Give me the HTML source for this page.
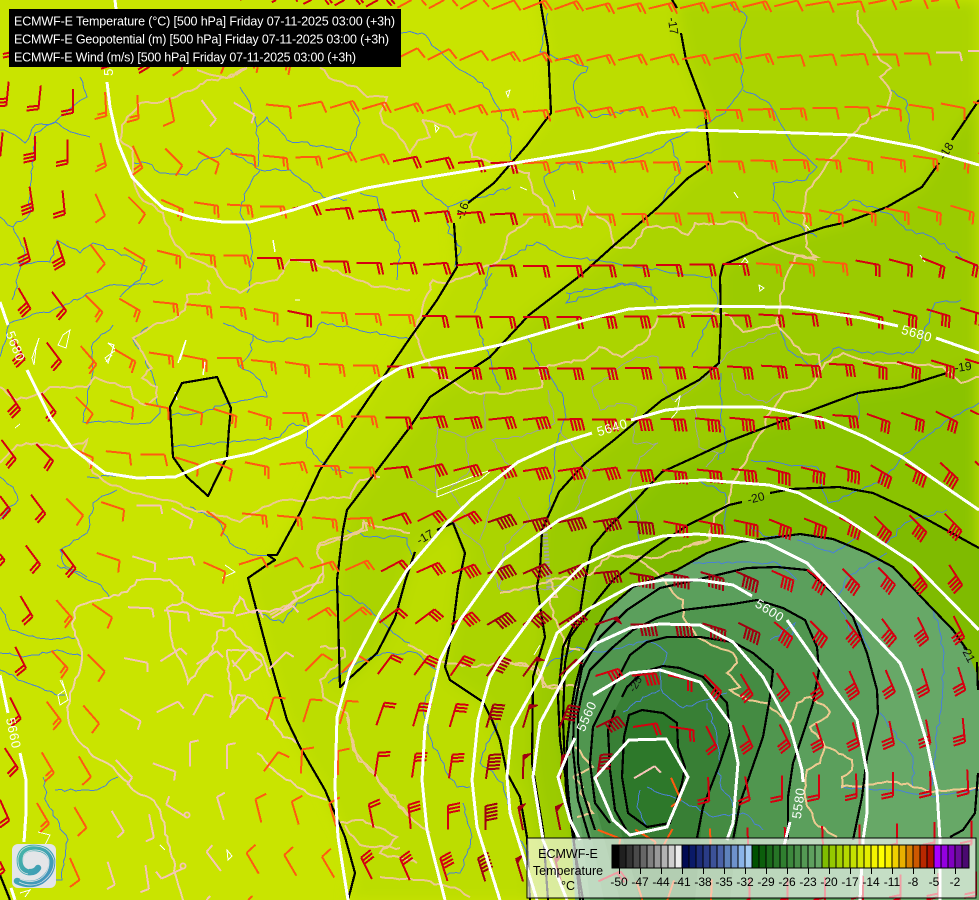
<!DOCTYPE html>
<html lang="en"><head><meta charset="utf-8"><title>ECMWF-E 500 hPa</title>
<style>
html,body{margin:0;padding:0;background:#c9e400;width:979px;height:900px;overflow:hidden}
svg{display:block;font-family:"Liberation Sans",sans-serif}
.wl{fill:#fff;font-size:13px;letter-spacing:.6px}
.bl{fill:#111;font-size:12px}
.k{fill:none;stroke:#000;stroke-width:2.2;stroke-linejoin:round;shape-rendering:crispEdges}
.w{fill:none;stroke:#fff;stroke-width:3;stroke-linejoin:round;stroke-linecap:butt;shape-rendering:crispEdges}
.r{fill:none;stroke:#4a82d4;stroke-width:1;shape-rendering:crispEdges}
.b{fill:none;stroke:#ecca90;stroke-width:2;shape-rendering:crispEdges}
.g{fill:none;stroke:#9ca39a;stroke-width:1;shape-rendering:crispEdges}
.c{fill:none;stroke:#fff;stroke-width:1;shape-rendering:crispEdges}
.t{fill:#fff;font-size:12.5px}
.l{fill:#000;font-size:12px;text-anchor:middle}
</style></head><body>
<svg id="m" xmlns="http://www.w3.org/2000/svg" width="979" height="900" viewBox="0 0 979 900">
<defs>
<filter id="bl" x="-5%" y="-5%" width="110%" height="110%"><feGaussianBlur stdDeviation="7"/></filter>
<linearGradient id="lg" x1="0" y1="0" x2="1" y2="1"><stop offset="0" stop-color="#45b7a6"/><stop offset=".6" stop-color="#3f9fb4"/><stop offset="1" stop-color="#4a8fc2"/></linearGradient>
</defs>
<rect width="979" height="900" fill="#c9e400"/>
<g filter="url(#bl)">
<polygon fill="#bcdd00" points="540,0 548,47 551,113 527,145 494,183 468,203 454,225 457,267 437,300 410,338 320,470 300,513 277,555 248,578 267,650 287,720 300,747 325,790 345,837 355,873 348,900 979,900 979,0"/>
<polygon fill="#abd400" points="677,0 681,33 686,60 705,110 710,163 688,178 655,210 612,247 581,275 529,315 490,357 430,397 410,427 347,510 343,530 337,580 340,687 377,653 395,618 405,582 415,552 453,523 465,553 458,587 453,627 445,667 450,680 483,702 500,740 507,773 520,797 527,837 530,900 979,900 979,0"/>
<polygon fill="#9bcb00" points="979,100 950,140 922,187 887,207 847,222 769,245 723,265 720,277 721,320 719,363 699,380 662,400 614,440 585,463 559,492 542,530 540,570 537,587 545,637 533,677 532,763 543,830 548,900 979,900"/>
<polygon fill="#8ac300" points="979,362 963,367 902,387 858,393 799,415 727,442 695,457 662,472 636,500 609,527 592,547 585,580 580,613 563,647 558,697 560,740 572,823 580,900 979,900"/>
</g>
<polygon fill="#7fbb00" points="979,548 910,510 873,493 839,487 791,489 756,498 729,505 688,525 651,550 613,580 597,600 570,637 565,663 563,720 566,790 575,850 580,900 979,900"/>
<polygon fill="#bedf00" points="182,383 217,377 231,408 229,428 227,457 208,496 187,477 173,457 170,407"/>
<polygon fill="#67a867" points="677,570 707,553 740,542 800,534 833,539 867,553 893,567 927,603 953,630 967,650 979,680 979,900 575,900 570,813 567,777 567,743 570,717 575,687 583,657 597,627 607,610 633,587"/>
<polygon fill="#5b9f5c" points="627,610 660,588 687,582 747,568 777,567 807,570 833,593 853,617 867,653 877,690 878,713 867,757 862,797 853,833 850,900 590,900 578,800 573,750 574,710 582,668 600,637"/>
<polygon fill="#50964f" points="683,610 733,604 757,600 783,608 805,620 817,647 819,670 813,703 802,737 793,763 788,797 788,900 604,900 583,793 578,763 578,713 582,693 590,670 613,647 633,630 657,618"/>
<polygon fill="#448b42" points="667,637 700,637 733,642 753,653 773,670 770,697 763,737 740,803 730,900 620,900 595,803 590,763 593,727 610,693 630,655 647,642"/>
<polygon fill="#387f35" points="663,666 680,668 703,677 727,703 730,733 720,763 703,807 695,900 640,900 615,810 610,770 608,730 615,710 627,687 643,672"/>
<polygon fill="#2d782a" points="642,710 663,713 677,723 678,747 685,767 682,783 670,823 647,827 628,813 622,777 624,737 629,715"/>

<!-- rivers -->
<g class="r" id="rv">
<path d="M0 265 15 263 50 262 57 240 80 253 93 243 117 252 147 267 140 280 120 297"/>
<path d="M80 77 87 97 77 103 57 120 35 133 33 167 30 193 30 213 13 227 25 253 12 300"/>
<path d="M0 217 13 227M0 130 15 135 25 143 35 125 55 122 75 133 90 137"/>
<path d="M133 163 147 163 160 173 187 175 203 160 217 157 227 148 243 158 260 170 290 170 307 183 323 197 347 200"/>
<path d="M260 170 247 190 240 213 250 233 253 267 247 293"/>
<path d="M240 87 250 103 257 127 258 167M257 127 267 117 287 140 327 147 350 153 360 123 353 107"/>
<path d="M360 193 377 197 387 227 400 247 397 280"/>
<path d="M0 357 10 323 37 313 53 310 83 297 110 285 153 285 163 280"/>
<path d="M113 325 93 343 92 377 83 422 150 423 160 413 153 377 140 350 133 340 148 327"/>
<path d="M223 323 253 335 267 342 310 337 322 322 410 340"/>
<path d="M253 335 250 353 240 367 260 380 267 397 230 403 197 413 172 415"/>
<path d="M172 447 200 445 253 440 280 437 293 423 307 427 307 447 317 457 333 470 353 473"/>
<path d="M87 477 173 477M190 507 217 520 230 543 253 555 270 555"/>
<path d="M117 490 93 503 87 533 60 550 63 563 87 577"/>
<path d="M0 477 13 487 18 500 0 520M57 565 97 583 110 598"/>
<path d="M0 607 10 630 37 638 77 638M0 670 33 685 60 695 65 695M0 653 23 657 57 650 83 657"/>
<path d="M55 790 97 790 118 777M43 777 47 803 68 840 62 880 47 883"/>
<path d="M257 613 283 623 297 603 337 590 367 607 393 633 410 643"/>
<path d="M328 683 350 667 383 653 417 653 437 670 423 707 430 737 445 770 457 787 470 787"/>
<path d="M463 803 472 837 460 873 447 875M347 530 370 537 407 538 412 555"/>
<path d="M497 723 480 763 503 783 513 827 530 860"/>
<path d="M729 3 747 17 740 40 743 87 725 113 695 130 670 140 651 153 614 163 566 163 544 177 555 207"/>
<path d="M743 90 769 103 791 143 817 167 806 180 773 183 773 200 788 220 817 237"/>
<path d="M891 90 906 100 910 140M825 220 854 200 887 213 906 230 932 237 976 267"/>
<path d="M548 13 540 52 588 67 574 82 577 103 592 117 636 110"/>
<path d="M400 33 422 33 452 63 489 90 511 137 511 160"/>
<path d="M670 140 681 170 670 187 659 207M511 187 485 197 465 200 448 207 426 190 422 180"/>
<path d="M485 290 489 267 537 242 566 257 596 260 636 267 710 277 718 300 718 303 706 327 692 357"/>
<path d="M448 207 448 233 461 247 455 267M566 293 636 283 658 300M570 293 566 303 622 283 651 287 655 303"/>
<path d="M474 313 492 273M479 330 492 367 500 390M527 337 540 367 562 393 566 417 555 450 555 477 548 510"/>
<path d="M721 373 721 420 727 443 718 460M780 327 788 350 814 367 839 347 862 353 913 353 921 340 935 303 961 300"/>
<path d="M858 393 858 420M979 403 947 420 902 457 880 483 828 503 817 467 751 460M947 510 905 523 885 545"/>
<path d="M699 480 725 493 725 533M636 510 640 543M751 527 769 537 800 534"/>
<path d="M887 553 847 577 838 600 852 640M797 540 833 553 860 535M693 563 777 563 797 580"/>
<path d="M933 607 943 647 943 687 930 793M880 713 913 757 913 787"/>
<path d="M790 643 795 623 770 640M640 790 637 807 647 827M647 787 673 797 713 817 743 813 763 830"/>
<path d="M660 673 663 693 683 708 707 700 727 693M660 690 643 697 623 712M707 703 717 737 720 783 733 807"/>
<path d="M543 667 577 647 603 652 647 640 667 653 660 673M840 787 897 790 933 797 979 790M850 610 870 650"/>
</g>
<!-- grey admin borders -->
<g class="g" id="gr">
<path d="M485 393 485 430 466 437 437 427 435 460 437 493M548 390 555 423 522 437 492 440 511 470 489 510 480 540"/>
<path d="M592 387 636 357 658 357 666 390 673 400 688 392 718 367 732 350 777 333"/>
<path d="M622 403 636 407 633 443 658 443 640 457 629 490 640 520M732 373 736 390 766 403 780 393"/>
<path d="M695 410 699 447 718 453 706 467M592 387 600 410 622 403M466 437 470 470 450 490 470 520"/>
<path d="M519 497 530 520 505 545 500 590M410 480 437 493M560 430 590 470 575 510"/>
<path d="M450 520 480 545 500 590 545 590 560 585 590 592"/>
</g>
<path d="M545 530 549 590" fill="none" stroke="#a3a69a" stroke-width="5" stroke-dasharray="2 1.5"/>
<!-- borders -->
<g class="b" id="bd">
<path d="M197 70 227 78 247 68M320 68 333 80 357 87 367 97 387 97 380 113 383 123 397 133 410 153 418 140"/>
<path d="M247 68 227 78 207 80 197 88 173 98 157 103 140 103 127 117 122 125 120 140 133 150 133 177 140 197 163 213 173 240 187 257 213 267 223 283 240 293 257 283 277 280 290 260 315 263 350 277 377 287 410 290"/>
<path d="M207 280 210 293 187 295 185 310 173 320 157 323 133 338 143 353 152 368 142 378 157 387 157 397 145 405 133 398 130 387 110 383 95 377 87 387 50 387 43 393 17 400 0 387"/>
<path d="M0 463 17 445 37 443 67 448 87 440 83 450 93 473 107 483 133 493 167 500 193 510 213 513 240 522 263 507 283 500 310 500 333 497 350 498 360 480 380 477"/>
<path d="M317 550 320 543 343 537 363 528 363 523 410 533M363 520 367 530 343 540 320 545 317 553 323 565 322 582 293 592 297 600 290 605 270 615"/>
<path d="M320 647 343 648 345 657 320 680 323 697 347 713 353 750 370 768 387 793 410 817 430 833"/>
<path d="M408 645 443 662 473 667 507 662 537 667 547 687 563 690"/>
<path d="M500 662 520 663 537 670 543 687 572 685 580 690M573 777 583 787 580 793 593 813 577 817M575 747 593 767 573 777"/>
<path d="M637 558 657 573 673 593 683 600 683 617 697 637 717 647 733 653 737 663 727 673 740 687 730 690 747 700 767 703 777 712 790 722 797 703 810 697 830 712 822 720 810 727 825 747 852 760 852 770 842 777 842 787 897 782 933 792 979 788"/>
<path d="M825 747 820 763 807 770 805 797 815 823 837 837"/>
<path d="M500 593 537 585 550 580 557 597 550 597 553 617 567 647 580 650M617 557 637 558M687 547 710 540 710 530"/>
<path d="M766 417 766 427 754 443 747 460 732 483 729 503 714 517 710 540 684 547 662 557 636 557 610 555 590 575 550 580"/>
<path d="M777 403 784 393 810 387 821 370 825 363 843 353 873 363 910 363 943 367 961 383 979 377M766 417 777 403"/>
<path d="M821 370 819 355 802 353 791 340 778 325 769 327 743 332 725 313 684 312 658 317 647 340 633 350 622 357 599 347 585 360 540 367 542 387 511 393 470 393 455 383 433 370 422 353 415 330 433 280 448 283 474 273 500 260 507 237 533 217"/>
<path d="M858 10 858 23 873 43 880 60 891 68 880 77 891 93 887 110 869 118 854 133 832 157 806 193 803 213 806 233 806 247 817 257 795 257 784 283 780 300 777 325"/>
<path d="M422 120 430 137 418 140M422 120 448 127 455 137 476 133 470 147 472 157 494 163 529 173 533 193 548 207 555 227 581 227 588 207 610 227 614 247 631 248 647 227 673 227 688 235 695 223 740 223 762 240 788 253 817 260"/>
<path stroke="#f0d0aa" d="M100 600 77 607 72 623 78 640 82 653 80 670 70 693 68 713 73 733 90 753 113 767 133 790 150 798 160 810 170 847 177 880 183 900"/>
<path stroke="#f0d0aa" d="M100 600 127 592 137 580 170 580 183 593 183 602 167 608 170 630 173 647 182 663 188 683 200 667 213 650 217 632 230 628 240 640 263 657 270 677"/>
<path stroke="#f2c8b8" d="M183 602 200 610 217 613 233 613 240 597 250 612 283 610 307 593 323 573"/>
<path stroke="#f0d0aa" d="M227 650 230 693 233 713 247 697 267 713 283 737 300 743M257 753 277 773 307 793 327 800M232 660 245 680 262 665 250 650 227 650"/>
<path d="M347 717 357 757 377 777 410 817M337 823 363 820 397 837 380 853 417 863M380 877 420 880 460 890 470 897M345 825 360 845 400 848"/>
</g>
<g class="c">
<path d="M437 497 480 480 492 470 482 473 437 490Z"/><path d="M63 335 70 330 66 348 58 345Z"/><path d="M36 348 39 338 32 358 34 365Z"/>
<path d="M108 343 116 350 105 358 108 363 114 345Z"/><path d="M106 362 112 355M15 428 20 424"/>
<path d="M506 92 510 90 508 97Z"/><path d="M435 125 439 128 436 132Z"/><path d="M759 285 764 288 760 291Z"/>
<path d="M60 680 65 690 58 695 60 705 68 700 62 680M38 832 50 835 45 845"/>
<path d="M20 893 30 890 25 897M227 850 232 856 228 860Z"/><path d="M225 565 235 572 222 578 M160 845 165 850"/>
<path stroke-width="1.5" d="M273 240 275 252 M175 392 177 400M180 360 186 340 178 363M205 362 203 375"/>
<path d="M300 300 295 300M534 655 540 645 M520 187 527 190M573 190 575 200M734 192 738 198"/>
<path d="M740 265 745 258 748 262Z"/><path d="M806 225 810 230M920 255 925 262"/>
<path d="M675 402 680 396 677 412 670 420"/>
</g>

<!-- black contours -->
<g class="k">
<path d="M540 0 548 47 551 113 527 145 494 183 468 203"/><path d="M454 223 457 267 437 300 410 338 320 470 300 513 277 555 268 555 275 560 267 565 248 578 267 650 287 720 300 747 325 790 345 837 355 873 348 900"/>
<path d="M182 383 217 377 231 408 229 428 227 457 208 496 187 477 173 457 170 407Z"/>
<path d="M0 875 10 900"/>
<path d="M672 0 677 8"/><path d="M681 33 686 60 705 110 710 163 688 178 655 210 612 247 581 275 529 315 490 357 430 397 410 427 347 510 343 530 337 580 340 687 377 653 395 618 405 582 415 552"/><path d="M437 530 453 523 465 553 458 587 453 627 445 667 450 680 483 702 492 720 500 740 507 773 520 797 527 837 530 900"/>
<path d="M979 100 952 140"/><path d="M939 163 922 187 887 207 847 222 825 227 769 245 723 265 720 277 721 320 719 363 699 380 662 400 614 440 585 463 559 492 542 530 540 570 537 587 545 637 533 677 532 763 543 830 548 900"/>
<path d="M947 373 902 387 858 393 799 415 777 423 727 442 695 457 662 472 636 500 609 527 592 547 585 580 580 613 563 647 558 697 560 740 572 823 580 900"/>
<path d="M979 548 910 510 873 493 839 487 791 489 770 493"/><path d="M742 502 729 505 688 525 651 550 613 580 597 600 570 637 565 663 563 720 566 790 575 850 583 900"/>
<path d="M967 650 953 630 927 603 893 567 867 553 833 539 800 534 740 542 707 553 677 570 633 587 607 610 597 627 583 657 575 687 570 717 567 743 567 777 570 813 575 840"/>
<path d="M977 662 978 690M978 773 975 813 963 830 950 837"/>
<path d="M627 610 660 588 687 582 747 568 777 567 807 570 833 593 853 617 867 653 877 690 878 713 867 757 862 797 853 840"/><path d="M627 610 600 637 582 668 574 710 573 750 578 800 590 840"/>
<path d="M683 610 733 604 757 600 783 608 805 620 817 647 819 670 813 703 802 737 793 763 788 797 788 840"/><path d="M683 610 657 618 633 630 613 647 590 670 582 693 578 713 578 763 583 793 595 830"/>
<path d="M667 637 700 637 733 642 753 653 773 670 770 697 763 737 740 803 733 840"/><path d="M667 637 647 642 630 655 617 680 610 693 593 727 590 763 595 803 610 823"/>
<path d="M663 666 680 668 703 677 727 703 730 733 720 763 703 807 697 838"/><path d="M663 666 643 672 627 687 622 697"/><path d="M615 710 608 730 610 770 615 810 628 833"/>
<path d="M642 710 663 713 677 723 678 747 685 767 682 783 670 823 647 827 628 813 622 777 624 737 629 715Z"/>
</g>
<g class="bl">
<text transform="translate(673,26) rotate(82)" text-anchor="middle" x="0" y="4">-17</text>
<text transform="translate(462,211) rotate(-68)" text-anchor="middle" y="4">-16</text>
<text transform="translate(946,151) rotate(-58)" text-anchor="middle" y="4">-18</text>
<text transform="translate(963,367) rotate(-8)" text-anchor="middle" y="4">-19</text>
<text transform="translate(756,498) rotate(-14)" text-anchor="middle" y="4">-20</text>
<text transform="translate(968,654) rotate(62)" text-anchor="middle" y="4">-21</text>
<text transform="translate(425,537) rotate(-30)" text-anchor="middle" y="4">-17</text>
<text transform="translate(635,684) rotate(-60)" text-anchor="middle" y="4" font-size="11">-25</text>
</g>

<g id="barbs" stroke-linecap="butt" shape-rendering="crispEdges" fill="none"></g>
<circle cx="187" cy="815" r="2.6" fill="none" stroke="#f5c4b8" stroke-width="1.8"/>
<circle cx="183" cy="866" r="2.6" fill="none" stroke="#f5c4b8" stroke-width="1.8"/>

<!-- white contours -->
<g class="w">
<path d="M115 0 116 9"/><path d="M107 82 110 107 118 143 132 177 147 193 163 208 193 218 223 222 250 222 293 210 333 197 367 188 400 182 485 168 592 150 658 133 688 130 769 132 854 135 917 147 979 165"/>
<path d="M0 302 8 325"/><path d="M27 370 50 417 72 448 105 473 137 478 175 477 210 462 253 453 300 433 340 408 383 378 400 368 437 358 500 345 585 320 629 309 695 306 788 307 862 318 898 326"/><path d="M936 338 979 353"/>
<path d="M0 675 8 713"/><path d="M20 753 26 780 26 813 24 842"/><path d="M11 888 15 900"/>
<path d="M348 900 338 837 335 787 337 717 350 670 380 613 407 570 447 523 474 497 518 462 555 445 592 433"/><path d="M631 420 666 410 699 407 762 407 825 420 865 437 902 457 954 493 979 510"/>
<path d="M445 900 427 830 422 780 425 727 440 660 460 620 503 560 559 520 629 490 666 482 703 480 769 485 799 493 843 517 913 563 927 577 979 630"/>
<path d="M500 900 477 827 472 780 478 720 490 677 500 660 537 610 583 565 623 547 663 536 697 534 733 537 767 543 807 563 850 610 900 663 910 687 927 743 937 790 940 840 940 900"/>
<path d="M537 900 510 813 507 777 512 727 540 677 557 633 587 610 633 585 663 580 700 580 733 585 752 596"/><path d="M787 620 813 657 833 687 857 720 867 773 867 813 863 840 860 900"/>
<path d="M567 900 543 840 533 777 540 723 567 673 597 643 630 628 660 624 700 625 733 642 763 677 790 727 802 770 803 782"/><path d="M790 822 783 850"/>
<path d="M580 840 570 820 558 777 568 753 575 738"/><path d="M593 695 630 673 660 670 700 682 730 723 738 763 733 823 727 840"/>
<path d="M595 778 629 740 666 739 688 777 667 827 630 835 613 820Z"/>
</g>
<g class="wl" text-anchor="middle">
<text transform="translate(108,72) rotate(-90)" y="5" font-size="13">5</text>
<text transform="translate(16,346) rotate(68)" y="5">5680</text>
<text transform="translate(917,333) rotate(16)" y="5">5680</text>
<text transform="translate(14,733) rotate(78)" y="5">5660</text>
<text transform="translate(612,427) rotate(-17)" y="5">5640</text>
<text transform="translate(770,610) rotate(32)" y="5">5600</text>
<text transform="translate(798,803) rotate(-82)" y="5">5580</text>
<text transform="translate(586,716) rotate(-66)" y="5">5560</text>
</g>

<!-- title -->
<rect x="9" y="9" width="392" height="58" fill="#000"/>
<text class="t" x="14" y="25.5" textLength="381" lengthAdjust="spacing">ECMWF-E Temperature (°C) [500 hPa] Friday 07-11-2025 03:00 (+3h)</text>
<text class="t" x="14" y="43.5" textLength="375" lengthAdjust="spacing">ECMWF-E Geopotential (m) [500 hPa] Friday 07-11-2025 03:00 (+3h)</text>
<text class="t" x="14" y="61.5" textLength="342" lengthAdjust="spacing">ECMWF-E Wind (m/s) [500 hPa] Friday 07-11-2025 03:00 (+3h)</text>

<!-- logo -->
<rect x="12" y="844" width="44" height="44" rx="6" fill="#e3e5e8"/>
<path d="M17 881 Q30 887 41 881 Q53 873 52 860 Q49 849 36 848 Q22 847 20 858 Q19 870 28 872 Q35 873 38 868" fill="none" stroke="url(#lg)" stroke-width="6.5" stroke-linecap="round"/>
<path d="M19 882 Q31 888 42 882 Q55 873 54 860 Q50 847 36 846 Q21 845 18 858 Q17 872 28 874" fill="none" stroke="#e3e5e8" stroke-width=".7"/>
<path d="M20 879 Q30 884 40 879 Q50 872 49 860 Q47 851 36 850 Q24 850 23 858 Q22 867 29 869" fill="none" stroke="#e3e5e8" stroke-width=".7"/>

<!-- legend -->
<rect x="527" y="838" width="449" height="60" fill="#fff" fill-opacity=".62" stroke="#000" stroke-width="1"/>
<g id="lgd" shape-rendering="crispEdges"></g>
<g font-size="12.5" fill="#000" text-anchor="middle">
<text x="568" y="858">ECMWF-E</text>
<text x="568" y="875">Temperature</text>
<text x="568" y="890">°C</text>
</g>
<g class="l">
<text x="619" y="886">-50</text><text x="640" y="886">-47</text><text x="661" y="886">-44</text><text x="682" y="886">-41</text><text x="703" y="886">-38</text><text x="724" y="886">-35</text><text x="745" y="886">-32</text><text x="766" y="886">-29</text><text x="787" y="886">-26</text><text x="808" y="886">-23</text><text x="829" y="886">-20</text><text x="850" y="886">-17</text><text x="871" y="886">-14</text><text x="892" y="886">-11</text><text x="913" y="886">-8</text><text x="934" y="886">-5</text><text x="955" y="886">-2</text>
</g>
</svg>
<script>
(function(){
var P=[
[10,-10,.6,-.6,4],[120,0,.7,-.5,4],[250,10,.9,-.5,4],[350,5,.9,-.5,3.5],[433,10,1,-.55,1.5],[500,10,1,-.4,2],[750,10,1,-.25,2],[900,10,1,-.2,2],[970,8,1,-.1,1],
[10,30,0,1,4],[100,40,.1,1,4],[250,50,.9,.4,2],[350,58,1,-.3,1.5],[400,60,1,-.5,1.5],[600,63,1,-.25,2.5],[800,62,1,-.1,2],[900,58,1,0,1.5],[945,55,1,0,.8],
[10,80,-.1,1,4],[42,83,-.1,1,4],[74,87,0,1,3.5],[107,92,.05,1,2.5],[138,93,.05,1,2],[172,97,.2,1,1.5],[203,99,.6,.8,.7],[235,102,.85,.5,.7],[268,104,1,.1,1.5],[300,107,1,-.2,1.5],[332,108,1,-.3,2.5],[432,110,1,-.3,2.5],[600,110,1,-.2,2.5],[800,110,1,0,2],[900,105,1,.15,1.5],[965,100,1,.2,1],
[9,133,-.1,1,4.5],[36,135,0,1,4],[70,140,0,1,3.5],[100,142,.25,1,2.5],[135,145,.4,.9,2],[167,148,.7,.7,1.5],[200,150,.9,.5,2],[230,155,1,.1,2],[265,155,1,.1,2],[330,155,1,-.3,2.5],[400,160,1,-.2,3.5],[500,160,1,-.05,3],[700,160,1,0,2.5],[900,160,1,.15,2.5],[960,160,1,.3,2.5],
[0,190,.1,1,5],[30,185,.15,1,4],[63,190,.1,1,4],[97,195,.4,.9,1.5],[130,198,.7,.7,2],[165,200,.9,.4,2],[195,202,1,.15,2.5],[228,203,1,.05,2],[260,205,1,0,2.5],[295,207,1,-.2,4],[327,208,1,-.1,4],[360,210,1,-.1,4],[420,211,1,-.1,3.5],[600,212,1,0,2.5],[850,205,1,.2,2.5],[960,205,1,.3,2.5],
[25,237,.25,.95,4.5],[60,240,.3,.9,4.5],[92,245,.6,.8,1.5],[125,247,.85,.5,2],[158,250,1,.25,2],[195,252,1,.1,2.5],[225,255,1,0,2.5],[258,256,1,0,4],[290,258,1,0,4],[325,260,1,0,4],[358,262,1,0,4],[392,263,1,-.05,4],[450,265,1,-.1,3.5],[520,265,1,0,3],[700,265,1,0,3],[800,262,1,.1,2.5],[950,255,1,.4,3],
[18,287,.5,.85,4],[53,291,.6,.8,4],[87,295,.7,.7,2.5],[120,297,.85,.5,2.5],[153,300,1,.1,2],[187,303,1,.1,2],[222,305,1,.05,2],[255,308,1,.2,2.5],[288,310,1,.2,3.5],[322,312,1,.02,2.5],[357,313,1,0,2.5],[400,315,1,0,3],[450,315,1,0,4],[600,315,1,0,4],[800,310,1,.05,4],[880,307,1,.25,4],[960,300,1,.3,4.5],
[15,340,.5,.85,4.5],[50,340,.6,.8,4],[85,345,.65,.75,2.5],[115,348,.85,.5,2],[150,350,1,.15,2],[183,352,1,.2,2.5],[215,355,1,0,2.5],[250,358,1,.1,2],[285,360,1,.15,2.5],[320,362,1,.05,2.5],[352,364,1,0,2.5],
[420,367,1,0,4.5],[600,367,1,0,5],[800,365,1,.05,5],[930,362,1,.3,5],
[10,390,.55,.85,4.5],[43,392,.6,.8,4],[77,397,.7,.7,1.5],[110,400,.95,.3,2],[145,403,1,.2,2],[180,405,1,.3,2],[215,407,.95,.3,2],[250,410,1,.3,2.5],[283,412,1,0,2.5],[318,414,1,.05,2.5],[352,416,1,0,2.5],[388,416,1,0,4],
[420,420,1,-.1,4.5],[600,420,1,0,5],[800,418,1,.05,5],[900,415,1,.35,5],[960,412,1,.5,5],
[2,450,.6,.8,4],[37,442,.7,.7,4],[72,450,.9,.4,1.5],[107,450,1,.1,2],[140,453,1,0,1.5],[175,456,.95,.3,1.5],[210,458,.9,.4,2],[245,460,1,.2,2],[280,462,1,-.1,2],[315,465,1,0,2.5],[348,466,1,0,2.5],[385,468,1,-.1,4],
[420,470,1,-.25,4],[560,470,1,-.15,5.5],[700,470,1,.1,5],[800,468,1,.25,5],[900,462,.85,.5,5],[970,458,.7,.7,5],
[0,495,.6,.8,4],[32,494,.6,.8,4],[67,500,.7,.7,1.5],[100,497,.9,.3,1.5],[137,504,1,0,.7],[172,505,.9,.5,.7],[207,508,.8,.6,2],[243,512,1,.1,2],[277,512,1,.1,2.5],[312,515,1,.1,2.5],[348,512,1,-.05,2.5],[382,518,.95,-.3,4],
[420,522,1,-.5,5],[540,522,1,-.2,6.5],[700,522,1,.2,6],[800,520,1,.4,6],[900,515,.7,.7,5],[960,512,.7,.7,5],
[25,536,.6,.8,4],[60,540,.6,.8,4],[100,552,.9,.3,2],[132,550,1,.3,.7],[165,560,1,-.1,.7],[200,560,.9,.4,2],[240,563,.95,-.3,1.5],[275,563,.95,-.4,2],[310,565,.95,-.3,2.5],
[345,570,.9,-.4,2.5],[380,570,.85,-.45,4],[417,572,.9,-.4,4],[450,572,.9,-.35,5],[485,573,.9,-.35,6.5],[521,573,.9,-.4,6.5],[557,573,.9,-.35,6.5],[600,573,1,-.1,6.5],[650,573,1,.2,6],[750,570,.9,.4,6],[850,565,.7,.7,6],[950,555,.55,.85,5],
[22,596,.5,.85,4],[57,599,.65,.75,2],[93,602,.8,.55,2],[128,605,1,.05,.7],[165,608,1,.1,.7],[200,610,1,.2,.7],[270,615,.85,-.5,.7],[308,618,.85,-.5,2.5],[340,620,.8,-.6,2.5],
[378,622,.8,-.6,4],[415,623,.8,-.6,4],[450,623,.85,-.5,5],[485,624,.85,-.5,6.5],[521,623,.8,-.55,6.5],[557,625,.85,-.55,6.5],[593,623,.9,-.3,7.5],[628,623,1,0,6.5],[663,624,1,.05,6.5],[700,623,1,.3,6.5],[735,623,.9,.45,6.5],[775,622,.7,.6,5.5],[850,617,.6,.8,6],[950,605,.45,.9,5],
[17,647,.45,.9,4],[53,650,.7,.75,2],[88,653,.7,.7,2],[124,656,1,.2,.7],[160,659,.85,-.55,.7],[270,660,.7,-.7,.7],[303,668,.7,-.7,1.5],[340,670,.7,-.7,1.5],
[377,672,.6,-.8,4],[412,672,.6,-.8,4],[448,673,.55,-.8,4],[485,675,.55,-.8,6.5],[521,675,.6,-.8,7.5],[558,677,.7,-.7,7.5],[595,675,.95,-.3,5.5],[628,675,1,-.1,5.5],[665,675,1,.2,3.5],[702,673,.7,.7,4.5],[738,673,.5,.85,5],[850,670,.4,.9,5],[950,660,.3,.95,5],
[11,700,.45,.9,4],[47,703,.6,.8,2],[83,703,.65,.75,2],[120,707,.85,.5,.7],[157,710,.9,-.45,.7],[193,713,.5,-.9,.7],[230,715,.3,-.95,.7],[268,718,.3,-.95,1.5],[303,720,.3,-.95,1.5],
[338,723,.3,-1,1.5],[373,723,.35,-1,4],[410,724,.3,-1,4],[447,725,.3,-1,4],[484,726,.3,-1,6.5],[521,727,.3,-1,7.5],[558,727,.4,-1,6.5],[593,727,.9,-.45,6.5],[630,725,1,-.15,4],[665,727,1,.15,3],[702,725,.45,.9,4],[735,723,.4,.9,4],[775,722,.45,.9,4],[800,725,.3,.95,4],[900,720,.2,1,4],[965,715,.1,1,4],
[7,750,.55,.85,4],[43,753,.5,.85,2],[80,756,.5,.85,2],[117,758,.7,.75,.7],[153,760,.95,.35,.7],[190,762,0,-1,.7],[227,763,0,-1,.7],[263,765,.6,-.8,1.5],[303,768,.05,-1,1.5],
[337,773,0,-1,1.5],[373,773,.15,-1,4],[410,773,.15,-1,4],[447,775,.15,-1,4],[483,775,.15,-1,6.5],[520,775,.02,-1,7.5],[558,777,.1,-1,7.5],[596,777,.15,-1,6.5],[630,777,.85,-.5,.7],[668,777,.4,.9,1.5],[705,775,.05,1,4],[742,775,.2,1,4],[800,775,0,1,4],[900,775,0,1,4],[960,772,.05,1,4],
[2,800,.4,.9,4],[38,802,.5,.85,2],[75,805,.5,.85,2],[113,808,.5,.85,.7],[150,810,.2,.98,.7],[224,815,-.3,-1,.7],[261,817,-.25,-1,1.5],[298,820,-.3,-1,1.5],[335,823,-.3,-1,1.5],
[372,825,-.2,-1,4],[408,825,-.1,-1,4],[445,826,0,-1,4],[482,827,0,-1,6],[518,827,-.2,-1,7.5],[556,828,-.2,-1,7.5],[610,822,.9,.35,1.5],[670,828,-.5,.9,1.5],[710,825,.05,1,3],[780,825,.05,1,4],[900,825,0,1,3.5],[970,825,0,1,3.5],
[72,856,.4,.9,2],[108,860,.3,.95,.7],[145,862,.15,1,.7],[222,868,-.6,-.8,.7],[258,871,-.5,-.85,1.5],[295,873,-.5,-.85,1.5],[333,875,-.5,-.85,1.5],
[370,877,-.45,-.9,4.5],[407,877,-.4,-.9,4.5],[443,877,-.3,-.95,5],[481,877,-.3,-.95,6.5],[518,880,-.3,-1,7.5],[780,880,0,1,3.5],[900,880,0,1,3.5]
];
var W=979,H=900;
function field(x,y){var w=0,dx=0,dy=0,s=0;for(var i=0;i<P.length;i++){var p=P[i],a=x-p[0],b=y-p[1],d=a*a+b*b+4,q=1/(d*d*d);var m=Math.sqrt(p[2]*p[2]+p[3]*p[3]);w+=q;dx+=q*p[2]/m;dy+=q*p[3]/m;s+=q*p[4];}
var l=Math.sqrt(dx*dx+dy*dy)||1;return[dx/l,dy/l,s/w];}
function f(n){return n.toFixed(1);}
/* clip a segment to the frame so nothing extends past the page */
function seg(x0,y0,x1,y1){var t0=0,t1=1,dx=x1-x0,dy=y1-y0,ps=[-dx,dx,-dy,dy],qs=[x0,W-x0,y0,H-y0];
 for(var i=0;i<4;i++){if(ps[i]===0){if(qs[i]<0)return '';}else{var r=qs[i]/ps[i];if(ps[i]<0){if(r>t1)return '';if(r>t0)t0=r;}else{if(r<t0)return '';if(r<t1)t1=r;}}}
 return 'M'+f(x0+t0*dx)+' '+f(y0+t0*dy)+'L'+f(x0+t1*dx)+' '+f(y0+t1*dy);}
var out={p:'',o:'',r:'',k:''},fl='';
var L=24,ca=Math.cos(78*Math.PI/180),sa=Math.sin(78*Math.PI/180);
for(var i=-1;i<=18;i++){var yb=9.4+51.3*i,sp=31.4+(yb-10)*.0073;
 for(var n=-18;n<=15;n++){var x=523+n*sp;if(x<-28||x>1005)continue;
  var t=(x-520)/500,y=yb-(x<520?29:12)*t*t;if(y<-30||y>925)continue;
  var v=field(x,y),dx=v[0],dy=v[1],s=v[2];
  var ex=x+dx*L,ey=y+dy*L,fx=dx*ca-dy*sa,fy=dx*sa+dy*ca,c,nf=[];
  if(s<1){c='p';nf=[9]}else if(s<2){c='o';nf=[12]}else if(s<3){c='o';nf=[12,9]}
  else if(s<4){c='r';nf=[12,12]}else if(s<5){c='r';nf=[12,12,12]}else if(s<6){c='r';nf=[12,12,12,12]}
  else if(s<7){c='k';nf=[12,12,12,12,12]}else{c='k';nf=[]}
  var d=seg(x,y,ex,ey);
  for(var j=0;j<nf.length;j++){var bx=ex-dx*3.6*j,by=ey-dy*3.6*j;d+=seg(bx,by,bx+fx*nf[j],by+fy*nf[j]);}
  out[c]+=d;
  if(c==='k'&&!nf.length&&ey+fy*8<H&&ey+fy*8>0&&ey<H&&ey>0&&ex>0&&ex<W){fl+='M'+f(ex)+' '+f(ey)+'L'+f(ex+fx*8)+' '+f(ey+fy*8)+'L'+f(ex-dx*5)+' '+f(ey-dy*5)+'Z';}
 }}
var h='<path d="'+out.p+'" stroke="#f5c4b8" stroke-width="2"/><path d="'+out.o+'" stroke="#ff5a10" stroke-width="2"/><path d="'+out.r+'" stroke="#d40010" stroke-width="2"/><path d="'+out.k+'" stroke="#a00010" stroke-width="2"/><path d="'+fl+'" fill="#a00010" stroke="#a00010" stroke-width="1"/>';
document.getElementById('barbs').innerHTML=h;
/* give hand-traced rivers and borders a natural wiggle */
var seed=12345;function rnd(){seed=(seed*1103515245+12345)&2147483647;return seed/2147483647-.5;}
function clampX(v){return Math.max(0,Math.min(W,v));}function clampY(v){return Math.max(0,Math.min(H,v));}
function rough(id,amp,step){var ps=document.getElementById(id).getElementsByTagName('path');
 for(var k=0;k<ps.length;k++){var d=ps[k].getAttribute('d'),res='',subs=d.split('M');
  for(var u=1;u<subs.length;u++){var nums=subs[u].trim().replace(/Z/g,'').split(/[\s,]+/).map(Number),cur='';
   for(var q=0;q+1<nums.length;q+=2){var ax=nums[q],ay=nums[q+1];
    if(q===0){cur='M'+ax+' '+ay;continue;}
    var px=nums[q-2],py=nums[q-1],len=Math.sqrt((ax-px)*(ax-px)+(ay-py)*(ay-py)),m=Math.max(1,Math.round(len/step));
    for(var e=1;e<=m;e++){var nx=px+(ax-px)*e/m,ny=py+(ay-py)*e/m;
     if(e<m){nx+=rnd()*amp;ny+=rnd()*amp;}
     cur+='L'+f(clampX(nx))+' '+f(clampY(ny));}
   }
   res+=cur;}
  ps[k].setAttribute('d',res);}}
rough('rv',3.2,5);rough('gr',3,5);rough('bd',2.8,5);
var C=['#000000','#202020','#333333','#4a4a4a','#666666','#808080','#999999','#b2b2b2','#cfcfcf','#ececec','#000a52','#0a1a68','#1c2c78','#2a3c86','#3c5298','#4a62a8','#5e82bc','#6e92cc','#8ab4e8','#a4ccf4','#005000','#0c5e0c','#1a6a1a','#267426','#2f7e2f','#3c883c','#488e48','#549854','#5ea05e','#66a866','#7fbc00','#94c800','#a4d000','#b4d800','#c4e000','#d4e800','#e4ee00','#f4f400','#ffff00','#f8f000','#f0d000','#e8b000','#d88000','#cc5800','#b82800','#b01000','#a800ff','#9400e0','#8000c0','#6c0c9c','#4a0a70'];
var g='';for(var k=0;k<51;k++){g+='<rect x="'+(612+k*7)+'" y="845" width="7" height="23" fill="'+C[k]+'" stroke="#000" stroke-width=".6"/>';}
for(var k=0;k<17;k++){var tx=619+21*k;g+='<rect x="'+tx+'" y="868" width="1" height="6" fill="#000"/>';}
document.getElementById('lgd').innerHTML=g;
})();
</script>
</body></html>
